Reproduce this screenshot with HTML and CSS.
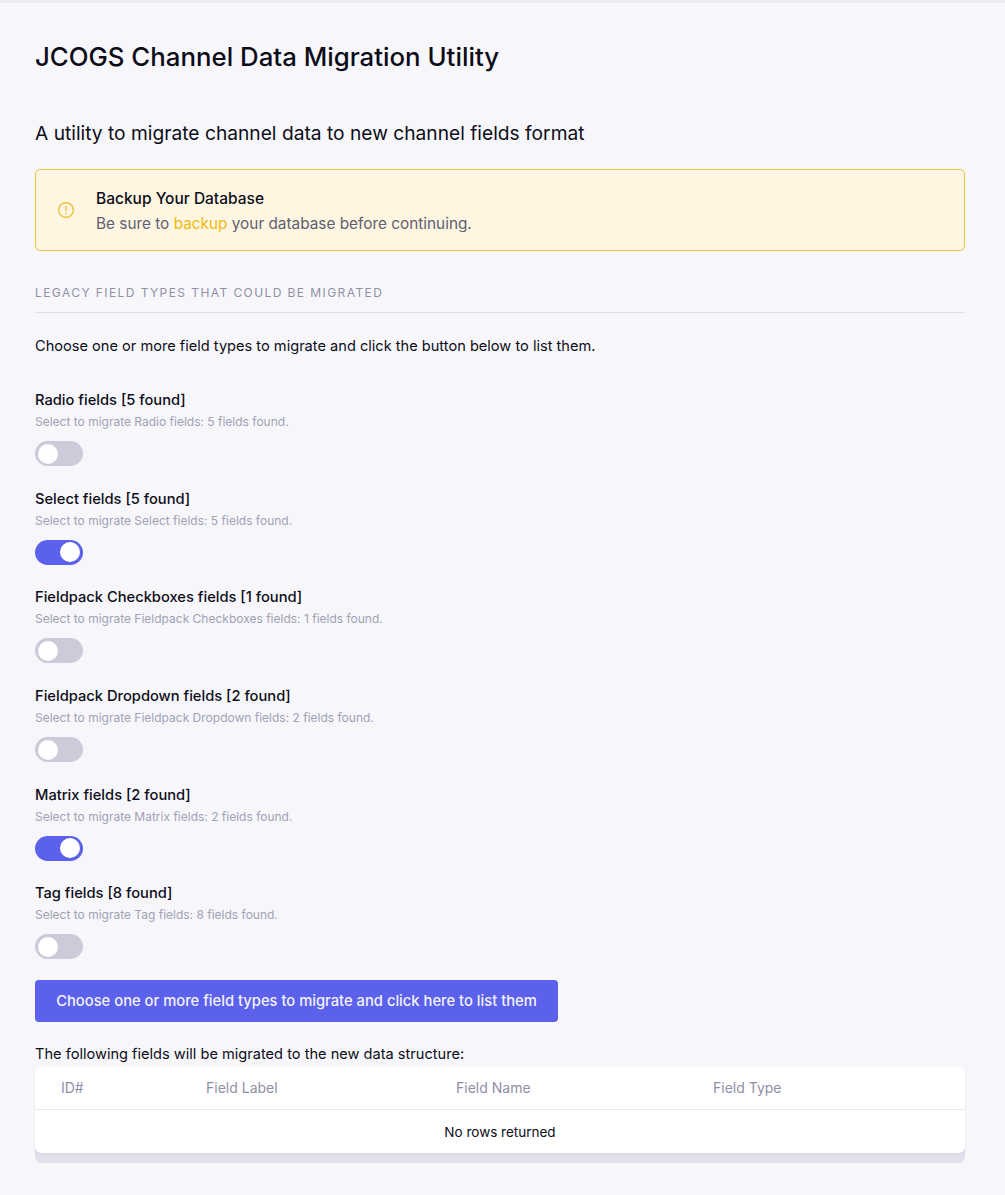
FILE: index.html
```html
<!DOCTYPE html>
<html lang="en">
<head>
    <meta charset="UTF-8">
    <meta name="viewport" content="width=device-width, initial-scale=1.0">
    <title>JCOGS Channel Data Migration Utility</title>
    <link rel="stylesheet" href="styles.css">
</head>
<body>
    <div class="top-strip"></div>
    <div class="container">
        <h1>JCOGS Channel Data Migration Utility</h1>
        <h2>A utility to migrate channel data to new channel fields format</h2>

        <!-- Warning -->
        <div class="alert">
            <svg class="alert-icon" width="18" height="18" viewBox="0 0 18 18" fill="none" stroke="#eebf3e" stroke-width="1.4" stroke-linecap="round">
                <circle cx="9" cy="9" r="7.3"></circle>
                <path d="M9 5.4v4"></path>
                <path d="M9 12.2v.2"></path>
            </svg>
            <div>
                <div class="alert-title">Backup Your Database</div>
                <div class="alert-text">Be sure to <a href="#">backup</a> your database before continuing.</div>
            </div>
        </div>

        <h3 class="section-title">Legacy field types that could be migrated</h3>
        <p class="intro">Choose one or more field types to migrate and click the button below to list them.</p>

        <!-- Field types -->
        <div class="field">
            <label class="field-label">Radio fields [5 found]</label>
            <div class="field-desc">Select to migrate Radio fields: 5 fields found.</div>
            <button class="toggle"></button>
        </div>
        <div class="field">
            <label class="field-label">Select fields [5 found]</label>
            <div class="field-desc">Select to migrate Select fields: 5 fields found.</div>
            <button class="toggle on"></button>
        </div>
        <div class="field">
            <label class="field-label">Fieldpack Checkboxes fields [1 found]</label>
            <div class="field-desc">Select to migrate Fieldpack Checkboxes fields: 1 fields found.</div>
            <button class="toggle"></button>
        </div>
        <div class="field">
            <label class="field-label">Fieldpack Dropdown fields [2 found]</label>
            <div class="field-desc">Select to migrate Fieldpack Dropdown fields: 2 fields found.</div>
            <button class="toggle"></button>
        </div>
        <div class="field">
            <label class="field-label">Matrix fields [2 found]</label>
            <div class="field-desc">Select to migrate Matrix fields: 2 fields found.</div>
            <button class="toggle on"></button>
        </div>
        <div class="field">
            <label class="field-label">Tag fields [8 found]</label>
            <div class="field-desc">Select to migrate Tag fields: 8 fields found.</div>
            <button class="toggle"></button>
        </div>

        <button class="submit">Choose one or more field types to migrate and click here to list them</button>

        <p class="table-intro">The following fields will be migrated to the new data structure:</p>
        <div class="table-wrap">
            <table>
                <thead>
                    <tr>
                        <th class="col-id">ID#</th>
                        <th class="col-label">Field Label</th>
                        <th class="col-name">Field Name</th>
                        <th>Field Type</th>
                    </tr>
                </thead>
                <tbody>
                    <tr>
                        <td colspan="4">No rows returned</td>
                    </tr>
                </tbody>
            </table>
        </div>
    </div>
</body>
</html>
```

FILE: styles.css
```css
* {
    box-sizing: border-box;
}
body {
    font-family: Inter, "Liberation Sans", sans-serif;
    margin: 0;
    padding: 0;
    background: #f7f7fb;
    color: #0d0d19;
}
.top-strip {
    height: 3px;
    background: #ececf1;
}
.container {
    padding: 0 40px 32px 35px;
}
h1 {
    font-size: 25.8px;
    font-weight: 500;
    line-height: 36px;
    margin: 36px 0 0;
}
h2 {
    font-size: 19.2px;
    font-weight: 400;
    line-height: 26px;
    margin: 45px 0 0;
}
.alert {
    display: flex;
    align-items: center;
    gap: 21px;
    height: 82px;
    margin-top: 23px;
    padding: 0 21px;
    background: #fff6e2;
    border: 1px solid #eec33f;
    border-radius: 5px;
}
.alert-title {
    font-size: 15.5px;
    font-weight: 500;
    line-height: 25px;
    padding-top: 1px;
}
.alert-text {
    font-size: 15.35px;
    line-height: 25px;
    color: #5f5f72;
}
.alert-text a {
    color: #f0b90f;
    text-decoration: none;
}
.section-title {
    font-size: 12px;
    font-weight: 400;
    line-height: 20px;
    letter-spacing: 1.42px;
    text-transform: uppercase;
    color: #8f90a6;
    margin: 32px 0 0;
    padding-bottom: 9px;
    border-bottom: 1px solid #e0e0e8;
}
.intro {
    font-size: 14.6px;
    line-height: 24px;
    margin: 21px 0 0;
}
.field {
    margin-top: 22.7px;
}
.intro + .field {
    margin-top: 32px;
}
.field-label {
    display: block;
    font-size: 14.7px;
    font-weight: 500;
    line-height: 20px;
}
.field-desc {
    font-size: 12px;
    line-height: 18px;
    margin-top: 3px;
    color: #a0a1b5;
}
.toggle {
    display: block;
    width: 48px;
    height: 25px;
    margin-top: 10px;
    padding: 0;
    border: none;
    border-radius: 13px;
    background: #cbcbd9;
    position: relative;
    cursor: pointer;
}
.toggle::after {
    content: "";
    position: absolute;
    top: 2.5px;
    left: 3px;
    width: 20px;
    height: 20px;
    border-radius: 50%;
    background: #fff;
}
.toggle.on {
    background: #5b61ea;
}
.toggle.on::after {
    left: 25px;
}
.submit {
    display: block;
    width: 523px;
    height: 42px;
    margin-top: 20.5px;
    padding: 0;
    background: #5b61ea;
    color: #f3f3fd;
    border: none;
    border-radius: 4px;
    cursor: pointer;
    font-family: inherit;
    font-size: 14.75px;
    font-weight: 500;
}
.table-intro {
    font-size: 14.6px;
    line-height: 20px;
    margin: 22px 0 0;
}
.table-wrap {
    margin-top: 2px;
    padding-bottom: 10px;
    background: #e0e1ea;
    border-radius: 6px;
}
table {
    width: 100%;
    border-collapse: separate;
    border-spacing: 0;
    table-layout: fixed;
    background: #fff;
    border-radius: 6px;
    box-shadow: 0 1px 3px rgba(40, 40, 70, 0.08);
}
th {
    height: 44px;
    padding: 0 18px;
    text-align: left;
    font-size: 14px;
    font-weight: 400;
    color: #8f90a6;
    border-bottom: 1px solid #e6e6ec;
}
.col-id {
    width: 153px;
    padding-left: 26px;
}
.col-label {
    width: 250px;
}
.col-name {
    width: 257px;
}
td {
    height: 43px;
    padding-top: 2px;
    text-align: center;
    font-size: 13.5px;
}
```
